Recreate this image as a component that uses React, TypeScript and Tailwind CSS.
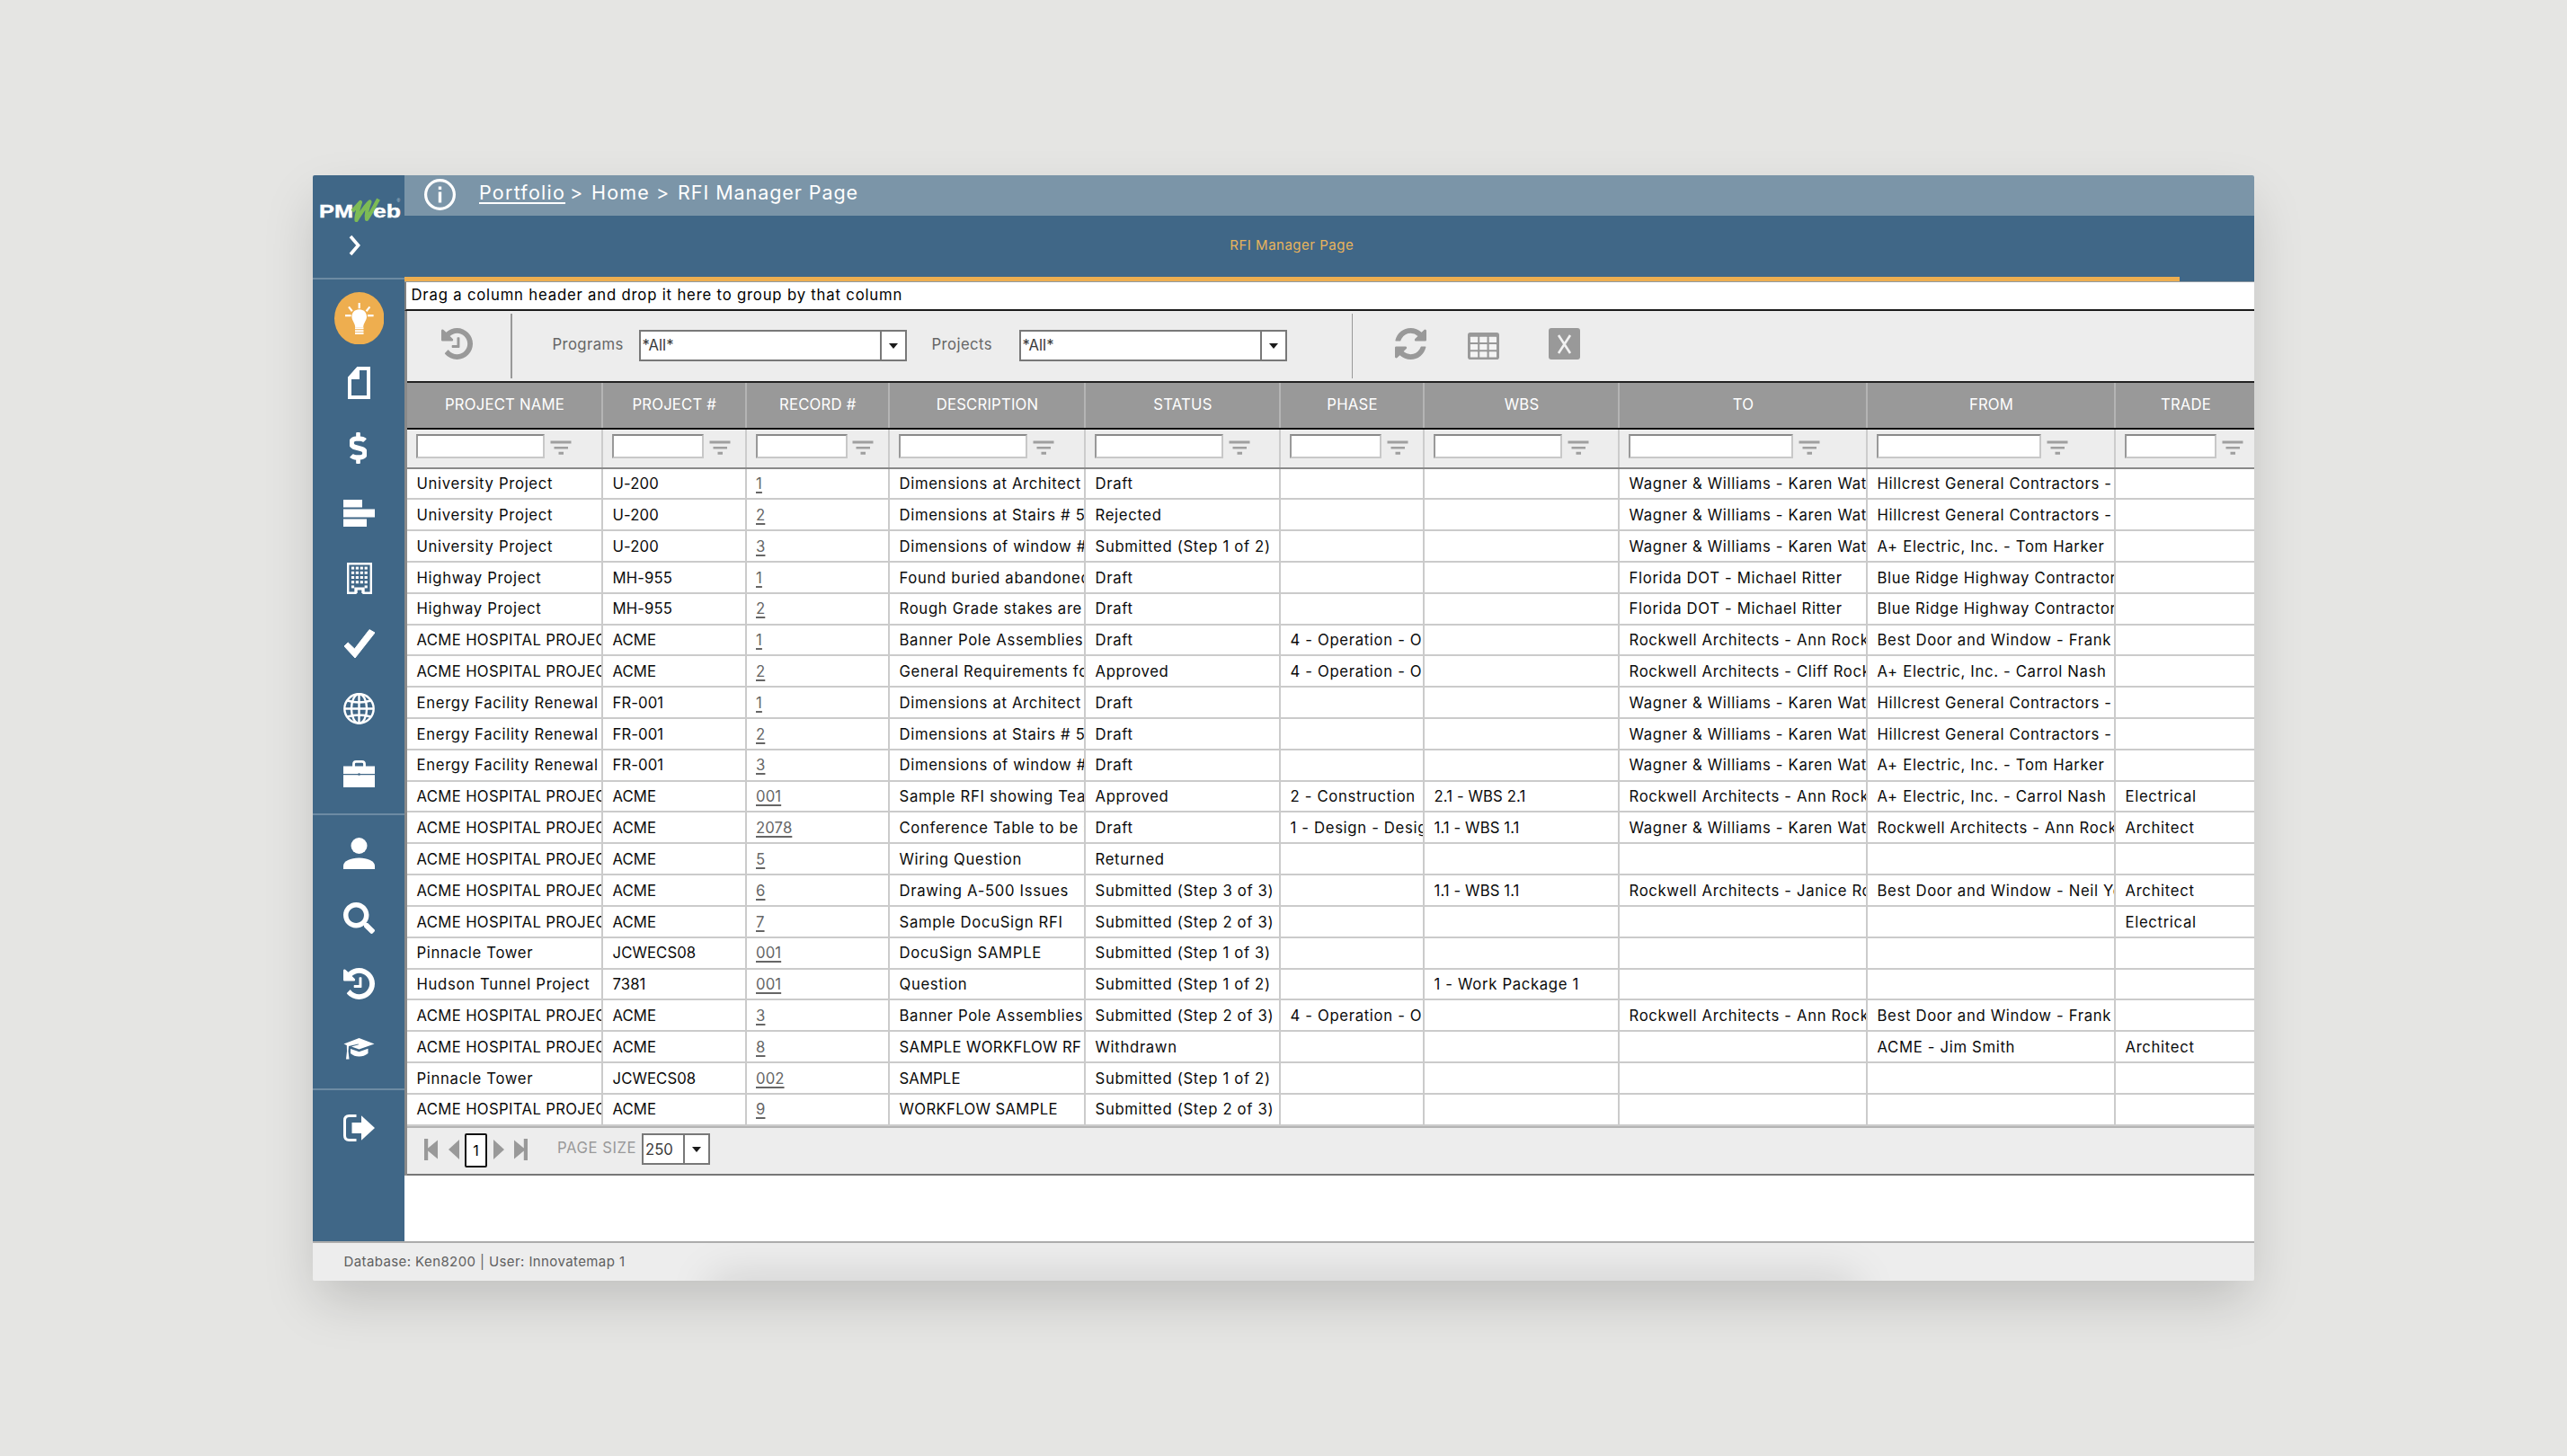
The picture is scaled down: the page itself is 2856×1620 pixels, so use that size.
import React from "react";
import { FaDollarSign, FaSearch } from "react-icons/fa";

const COLS =
  "grid grid-cols-[218px_159.5px_159.5px_218px_217px_160px_217px_276px_276px_155px]";

const REFRESH =
  "M1639 1056q0 5-1 7-64 268-268 434.5t-478 166.5q-146 0-282.5-55t-243.5-157l-129 129q-19 19-45 19t-45-19-19-45v-448q0-26 19-45t45-19h448q26 0 45 19t19 45-19 45l-137 137q71 66 161 102t187 36q134 0 250-65t186-179q11-17 53-117 8-23 30-23h192q13 0 22.5 9.5t9.5 22.5zm25-800v448q0 26-19 45t-45 19h-448q-26 0-45-19t-19-45 19-45l138-138q-148-137-349-137-134 0-250 65t-186 179q-11 17-53 117-8 23-30 23h-199q-13 0-22.5-9.5t-9.5-22.5v-7q65-268 270-434.5t480-166.5q146 0 284 55.5t245 156.5l130-129q19-19 45-19t45 19 19 45z";
const HISTORY =
  "M1664 896q0 156-61 298t-164 245-245 164-298 61q-172 0-327-72.5t-264-204.5q-7-10-6.5-22.5t8.5-20.5l137-138q10-9 25-9 16 2 23 12 73 95 179 147t225 52q104 0 198.5-40.5t163.5-109.5 109.5-163.5 40.5-198.5-40.5-198.5-109.5-163.5-163.5-109.5-198.5-40.5q-98 0-188 35.5t-160 101.5l137 138q31 30 14 69-17 40-59 40h-448q-26 0-45-19t-19-45v-448q0-42 40-59 39-17 69 14l130 129q107-101 244.5-156.5t284.5-55.5q156 0 298 61t245 164 164 245 61 298zm-640-288v448q0 14-9 23t-23 9h-320q-14 0-23-9t-9-23v-64q0-14 9-23t23-9h224v-352q0-14 9-23t23-9h64q14 0 23 9t9 23z";

type Column = { title: string; input: string };
const columns: Column[] = [
  { title: "PROJECT NAME", input: "w-[143px]" },
  { title: "PROJECT #", input: "w-[102px]" },
  { title: "RECORD #", input: "w-[102px]" },
  { title: "DESCRIPTION", input: "w-[143px]" },
  { title: "STATUS", input: "w-[143px]" },
  { title: "PHASE", input: "w-[102px]" },
  { title: "WBS", input: "w-[143px]" },
  { title: "TO", input: "w-[183px]" },
  { title: "FROM", input: "w-[183px]" },
  { title: "TRADE", input: "w-[102px]" },
];

const UNI = "University Project";
const HWY = "Highway Project";
const ACME = "ACME HOSPITAL PROJEC";
const ENERGY = "Energy Facility Renewal";
const WAGNER = "Wagner & Williams - Karen Wat";
const HILL = "Hillcrest General Contractors -";
const ROCK = "Rockwell Architects - Ann Rock";

const rows: string[][] = [
  [UNI, "U-200", "1", "Dimensions at Architect", "Draft", "", "", WAGNER, HILL, ""],
  [UNI, "U-200", "2", "Dimensions at Stairs # 5", "Rejected", "", "", WAGNER, HILL, ""],
  [UNI, "U-200", "3", "Dimensions of window #", "Submitted (Step 1 of 2)", "", "", WAGNER, "A+ Electric, Inc. - Tom Harker", ""],
  [HWY, "MH-955", "1", "Found buried abandoned", "Draft", "", "", "Florida DOT - Michael Ritter", "Blue Ridge Highway Contractor", ""],
  [HWY, "MH-955", "2", "Rough Grade stakes are", "Draft", "", "", "Florida DOT - Michael Ritter", "Blue Ridge Highway Contractor", ""],
  [ACME, "ACME", "1", "Banner Pole Assemblies", "Draft", "4 - Operation - O", "", ROCK, "Best Door and Window - Frank", ""],
  [ACME, "ACME", "2", "General Requirements fo", "Approved", "4 - Operation - O", "", "Rockwell Architects - Cliff Rock", "A+ Electric, Inc. - Carrol Nash", ""],
  [ENERGY, "FR-001", "1", "Dimensions at Architect", "Draft", "", "", WAGNER, HILL, ""],
  [ENERGY, "FR-001", "2", "Dimensions at Stairs # 5", "Draft", "", "", WAGNER, HILL, ""],
  [ENERGY, "FR-001", "3", "Dimensions of window #", "Draft", "", "", WAGNER, "A+ Electric, Inc. - Tom Harker", ""],
  [ACME, "ACME", "001", "Sample RFI showing Tea", "Approved", "2 - Construction", "2.1 - WBS 2.1", ROCK, "A+ Electric, Inc. - Carrol Nash", "Electrical"],
  [ACME, "ACME", "2078", "Conference Table to be s", "Draft", "1 - Design - Desig", "1.1 - WBS 1.1", WAGNER, ROCK, "Architect"],
  [ACME, "ACME", "5", "Wiring Question", "Returned", "", "", "", "", ""],
  [ACME, "ACME", "6", "Drawing A-500 Issues", "Submitted (Step 3 of 3)", "", "1.1 - WBS 1.1", "Rockwell Architects - Janice Ro", "Best Door and Window - Neil Yo", "Architect"],
  [ACME, "ACME", "7", "Sample DocuSign RFI", "Submitted (Step 2 of 3)", "", "", "", "", "Electrical"],
  ["Pinnacle Tower", "JCWECS08", "001", "DocuSign SAMPLE", "Submitted (Step 1 of 3)", "", "", "", "", ""],
  ["Hudson Tunnel Project", "7381", "001", "Question", "Submitted (Step 1 of 2)", "", "1 - Work Package 1", "", "", ""],
  [ACME, "ACME", "3", "Banner Pole Assemblies", "Submitted (Step 2 of 3)", "4 - Operation - O", "", ROCK, "Best Door and Window - Frank", ""],
  [ACME, "ACME", "8", "SAMPLE WORKFLOW RF", "Withdrawn", "", "", "", "ACME - Jim Smith", "Architect"],
  ["Pinnacle Tower", "JCWECS08", "002", "SAMPLE", "Submitted (Step 1 of 2)", "", "", "", "", ""],
  [ACME, "ACME", "9", "WORKFLOW SAMPLE", "Submitted (Step 2 of 3)", "", "", "", "", ""],
];

function tracking(text: string) {
  if (/[a-z]/.test(text)) return "tracking-[0.67px]";
  return text.length > 14 ? "tracking-[0.34px]" : "tracking-[0.1px]";
}

function Glyph({ box, className, children }: { box: string; className: string; children: React.ReactNode }) {
  return (
    <svg viewBox={box} preserveAspectRatio="none" className={`shrink-0 ${className}`}>
      {children}
    </svg>
  );
}

function Logo() {
  return (
    <svg viewBox="0 0 102 32" className="block h-[32px] w-[102px]">
      <text x="7" y="26.3" fontFamily="Liberation Sans" fontWeight="700" fontSize="20.5" fill="#fff" stroke="#fff" strokeWidth="0.4" textLength="38" lengthAdjust="spacingAndGlyphs">PM</text>
      <text x="67" y="26.3" fontFamily="Liberation Sans" fontWeight="700" fontSize="20.5" fill="#fff" stroke="#fff" strokeWidth="0.4" textLength="31" lengthAdjust="spacingAndGlyphs">eb</text>
      <path d="M44 19 L53 9 C51 16 48 23 48.5 29 C53 22 58 13 63.5 8.5 C61 15 59 22 60 28 C65 21 69 13 73 5.5" fill="none" stroke="#7dbb55" strokeWidth="4.2" strokeLinejoin="round" />
      <text x="93.5" y="8.5" fontFamily="Liberation Sans" fontSize="5" fill="#c9d6df">®</text>
    </svg>
  );
}

function NavSlot({ children }: { children: React.ReactNode }) {
  return <div className="flex h-[72.5px] w-full items-center justify-center pl-[1px]">{children}</div>;
}

function Bulb() {
  return (
    <svg viewBox="0 0 55.5 58.5" className="h-[58.5px] w-[55.5px]">
      <ellipse cx="27.75" cy="29.25" rx="27.75" ry="29.25" fill="#eeae4f" />
      <g stroke="#fff" strokeWidth="2.2">
        <path d="M27.7 12V18.2M16 16.4l3.8 4.8M39.4 16.4l-3.8 4.8M12 26.2h6.6M37 26.2h6.6" />
        <path d="M23 40.3h9.5M23 43.2h9.5M23 46h9.5" strokeWidth="1.9" />
      </g>
      <path d="M27.7 19.3c-5 0-8.3 3.6-8.3 8 0 4.6 3.4 6.5 3.8 11.6h9c.4-5.1 3.8-7 3.8-11.6 0-4.4-3.3-8-8.3-8z" fill="#fff" />
    </svg>
  );
}

const WINDOW_X = [4.9, 9.8, 14.7, 19.6];
const WINDOW_Y = [4.6, 9.8, 15, 20.2, 25.4];

function Sidebar() {
  return (
    <aside className="flex h-[1186px] w-[102px] shrink-0 flex-col bg-[#406787] text-white">
      <div className="h-[114px] pt-[21px]">
        <Logo />
        <Glyph box="0 0 14 24" className="ml-[40px] mt-[13px] h-[24px] w-[14px]">
          <path d="M2 2l8.6 10L2 22" fill="none" stroke="#fff" strokeWidth="3.6" />
        </Glyph>
      </div>
      <div className="h-[596px] border-t-2 border-[#6d8ba3] pt-[6.5px]">
        <NavSlot><Bulb /></NavSlot>
        <NavSlot>
          <Glyph box="0 0 25 36" className="h-[36px] w-[25px]">
            <path d="M11.5 2H23V34H2V12.5z" fill="none" stroke="#fff" strokeWidth="4" />
            <path d="M0 12L10.5 0h2.5v14H0z" fill="#fff" />
          </Glyph>
        </NavSlot>
        <NavSlot>
          <FaDollarSign viewBox="14 0 260 512" preserveAspectRatio="none" className="mr-[2px] h-[35px] w-[19px]" />
        </NavSlot>
        <NavSlot>
          <Glyph box="0 0 35 30" className="h-[30px] w-[35px]">
            <path d="M0 0h21v8.5H0zM0 10.6h35v9H0zM0 21.5h26v8.5H0z" fill="#fff" />
          </Glyph>
        </NavSlot>
        <NavSlot>
          <Glyph box="0 0 28 35" className="h-[35px] w-[28px]">
            <path d="M1.2 1.2h25.6v32.6H18.5V28.6h-9v5.2H1.2z" fill="none" stroke="#fff" strokeWidth="2.4" />
            <path d="M9.5 28h9v6h-2.2v-3.6h-4.6V34H9.5z" fill="#fff" />
            {WINDOW_Y.map((y) =>
              WINDOW_X.map((x) =>
                y > 25 && x > 5 && x < 19 ? null : <rect key={`${x}-${y}`} x={x} y={y} width="3.2" height="3" fill="#fff" />
              )
            )}
          </Glyph>
        </NavSlot>
        <NavSlot>
          <Glyph box="0 0 34 32" className="h-[32px] w-[34px]">
            <path d="M0 19L4.2 15 11.5 22 28 0.6 34 4 12 32z" fill="#fff" stroke="#fff" strokeWidth="1" strokeLinejoin="round" />
          </Glyph>
        </NavSlot>
        <NavSlot>
          <Glyph box="0 0 35 35" className="h-[35px] w-[35px]">
            <g fill="none" stroke="#fff" strokeWidth="2.4">
              <circle cx="17.5" cy="17.5" r="16.2" />
              <ellipse cx="17.5" cy="17.5" rx="8.6" ry="16.2" />
              <path d="M17.5 1.5v32M1.5 17.5h32M4.5 8.5q13 4 26 0M4.5 26.5q13-4 26 0" />
            </g>
          </Glyph>
        </NavSlot>
        <NavSlot>
          <Glyph box="0 0 35 30" className="h-[30px] w-[35px]">
            <path d="M0 6.5h35V15H0zM0 16.2h35V30H0z" fill="#fff" />
            <path d="M11.5 7V4q0-2.6 2.6-2.6h6.8Q23.5 1.4 23.5 4v3" fill="none" stroke="#fff" strokeWidth="2.8" />
            <circle cx="17.5" cy="15.5" r="1.3" fill="#406787" />
          </Glyph>
        </NavSlot>
      </div>
      <div className="h-[306px] border-t-2 border-[#6d8ba3] pt-[6px]">
        <NavSlot>
          <Glyph box="0 0 35 35" className="h-[35px] w-[35px]">
            <circle cx="17.5" cy="9" r="9" fill="#fff" />
            <path d="M0 35v-3.5C0 26 8 22.5 17.5 22.5S35 26 35 31.5V35z" fill="#fff" />
          </Glyph>
        </NavSlot>
        <NavSlot>
          <FaSearch preserveAspectRatio="none" className="h-[35px] w-[35px]" />
        </NavSlot>
        <NavSlot>
          <Glyph box="128 128 1536 1536" className="h-[35px] w-[35px]"><path d={HISTORY} fill="#fff" /></Glyph>
        </NavSlot>
        <NavSlot>
          <Glyph box="0 0 35 24" className="h-[24px] w-[35px]">
            <path d="M0.5 6.5L17.5 0 34.5 6.5 17.5 12.5 9 9.5 17 7.3 16.7 6.5 6 8.9 5.5 14.5 6.5 23.5H3L4 14.5 3.8 8z" fill="#fff" />
            <path d="M8 12L17.5 15.3 27.5 11.8V17Q23 20.5 17.5 20.5T8 17z" fill="#fff" />
          </Glyph>
        </NavSlot>
      </div>
      <div className="border-t-2 border-[#6d8ba3] pt-[6px]">
        <NavSlot>
          <Glyph box="0 0 35 30" className="h-[30px] w-[35px]">
            <path d="M14.5 1.5H6.5Q1.5 1.5 1.5 6.5v17q0 5 5 5h8" fill="none" stroke="#fff" strokeWidth="3" />
            <path d="M9.5 9H20V1.2L35 15 20 28.8V21H9.5z" fill="#fff" />
          </Glyph>
        </NavSlot>
      </div>
    </aside>
  );
}

function Select({ value, className }: { value: string; className: string }) {
  return (
    <div className={`flex h-[35px] shrink-0 border-2 border-[#787878] bg-white ${className}`}>
      <span className="flex flex-1 items-center pl-[2px] pt-[1px] text-[16.7px] text-[#3a3a3a]">{value}</span>
      <span className="flex w-[28px] items-center justify-center border-l-2 border-[#787878]">
        <span className="h-0 w-0 border-x-[5.5px] border-t-[6.5px] border-x-transparent border-t-[#1a1a1a]" />
      </span>
    </div>
  );
}

function Toolbar() {
  return (
    <div className="flex h-[78px] items-start bg-[#ededed] text-[#999]">
      <Glyph box="128 128 1536 1536" className="ml-[38px] mt-[18.5px] h-[35px] w-[35px]"><path d={HISTORY} fill="currentColor" /></Glyph>
      <span className="ml-[42px] mt-[2.5px] h-[72px] w-[1.5px] bg-[#999]" />
      <span className="ml-[45px] mt-[25px] w-[96px] text-[16.7px] leading-[24px] tracking-[0.4px] text-[#666]">Programs</span>
      <Select value="*All*" className="mt-[21px] w-[298px]" />
      <span className="ml-[28px] mt-[25px] w-[97px] text-[16.7px] leading-[24px] tracking-[0.43px] text-[#666]">Projects</span>
      <Select value="*All*" className="mt-[21px] w-[298px]" />
      <span className="ml-[72px] mt-[2.5px] h-[72px] w-[1.5px] bg-[#999]" />
      <Glyph box="128 128 1536 1536" className="ml-[46.5px] mt-[18.5px] h-[35px] w-[35px]"><path d={REFRESH} fill="currentColor" /></Glyph>
      <Glyph box="0 0 35 30" className="ml-[46.5px] mt-[23.5px] h-[30px] w-[35px]">
        <rect width="35" height="30" rx="2.8" fill="currentColor" />
        {[4.8, 13, 21.2].map((y) =>
          [2.9, 13.2, 23.7].map((x) => <rect key={`${x}-${y}`} x={x} y={y} width="8.3" height="6.2" rx="0.5" fill="#f4f4f4" />)
        )}
      </Glyph>
      <Glyph box="0 0 35 35" className="ml-[55px] mt-[18.5px] h-[35px] w-[35px]">
        <rect width="35" height="35" rx="3" fill="currentColor" />
        <path d="M11 8L24 28M24 8L11 28" stroke="#f2f2f2" strokeWidth="2.6" fill="none" />
      </Glyph>
    </div>
  );
}

function FilterIcon() {
  return (
    <Glyph box="0 0 24 16" className="ml-[5.5px] mt-[12px] h-[16px] w-[24px]">
      <path d="M0.5 0.5h23v3h-23zM4.5 7h15.5v2.6H4.5zM9.5 12.7h5.5v3H9.5z" fill="#9f9f9f" />
    </Glyph>
  );
}

function Grid() {
  return (
    <div>
      <div className={`${COLS} h-[49.5px] overflow-hidden bg-[#999]`}>
        {columns.map((c) => (
          <div key={c.title} className="flex items-center justify-center border-r-2 border-[#b4b4b4] pl-[1px] text-[16.7px] tracking-[0.2px] text-white last:border-0">{c.title}</div>
        ))}
      </div>
      <div className={`${COLS} h-[46px] overflow-hidden border-b-2 border-t-2 border-b-[#8a8a8a] border-t-[#111] bg-[#ededed]`}>
        {columns.map((c) => (
          <div key={c.title} className="flex border-r-2 border-[#ccc] pl-[10px] last:border-0">
            <span className={`mt-[5px] h-[27.5px] shrink-0 border-2 border-b-[#c8c8c8] border-l-[#999] border-r-[#c8c8c8] border-t-[#8a8a8a] bg-white ${c.input}`} />
            <FilterIcon />
          </div>
        ))}
      </div>
      {rows.map((r, i) => (
        <div key={i} className={`${COLS} h-[34.82px] border-b-2 border-[#cbcbcb] bg-white text-[16.7px] text-[#0a0a0a]`}>
          {r.map((t, j) => (
            <div
              key={j}
              className={`flex items-center overflow-hidden whitespace-nowrap border-r-2 border-[#cbcbcb] pl-[10.5px] pt-[1.5px] last:border-0 ${tracking(t)}`}
            >
              {j === 2 ? <span className="text-[#666] underline decoration-[1.5px] underline-offset-[3px]">{t}</span> : t}
            </div>
          ))}
        </div>
      ))}
    </div>
  );
}

function Pager() {
  return (
    <div className="flex h-[55px] items-start border-b-2 border-t-2 border-b-[#777] border-t-[#b4b4b4] bg-[#ededed]">
      <Glyph box="0 0 15 24" className="ml-[19px] mt-[12px] h-[24px] w-[15px]"><path d="M0 0h4.2v10.6L15 1.5v21L4.2 13.4V24H0z" fill="#999" /></Glyph>
      <Glyph box="0 0 12 22" className="ml-[11.5px] mt-[13px] h-[22px] w-[12px]"><path d="M12 0v22L0 11z" fill="#999" /></Glyph>
      <span className="ml-[6.5px] mt-[6.5px] flex h-[38px] w-[25px] items-center justify-center rounded-[2px] border-2 border-[#111] bg-white text-[16px] text-black">1</span>
      <Glyph box="0 0 12 22" className="ml-[7px] mt-[13px] h-[22px] w-[12px]"><path d="M0 0v22L12 11z" fill="#999" /></Glyph>
      <Glyph box="0 0 15 24" className="ml-[11px] mt-[12px] h-[24px] w-[15px]"><path d="M15 0h-4.2v10.6L0 1.5v21l10.8-9.1V24H15z" fill="#999" /></Glyph>
      <span className="ml-[33px] mt-[10.5px] w-[94px] text-[16.7px] leading-[24px] tracking-[0.53px] text-[#999]">PAGE SIZE</span>
      <Select value="250" className="mt-[6.5px] w-[76px]" />
    </div>
  );
}

function StatusBar() {
  return (
    <footer className="relative flex flex-1 items-center overflow-hidden border-t-2 border-[#acacac] bg-[#ededed] pl-[34.5px] text-[15px] tracking-[0.4px] text-[#5f5f5f]">
      <span>Database: Ken8200 | User: Innovatemap 1</span>
      <span className="absolute left-[450px] right-[450px] top-[44px] h-[40px] shadow-[0_0_50px_6px_rgba(0,0,0,0.13)]" />
    </footer>
  );
}

export default function App() {
  return (
    <div className="flex h-[1620px] w-[2856px] items-start justify-center bg-[#e5e5e3] pt-[195px] font-['Inter',sans-serif]">
      <div className="flex h-[1230px] w-[2160px] flex-col overflow-hidden rounded-[2px] shadow-[0_25px_55px_-5px_rgba(0,0,0,0.17)]">
        <div className="flex h-[1186px] shrink-0">
          <Sidebar />
          <main className="flex min-w-0 flex-1 flex-col bg-white">
            <div className="flex h-[45px] shrink-0 items-center bg-[#7b95a8] text-[21.5px] text-white">
              <svg viewBox="0 0 35 35" className="ml-[22px] h-[35px] w-[35px] -translate-y-[1px]">
                <circle cx="17.5" cy="17.5" r="15.9" fill="none" stroke="#fff" strokeWidth="3.2" />
                <path d="M15.8 8.5h3.4v3.6h-3.4zM15.8 14.5h3.4V26.5h-3.4z" fill="#fff" />
              </svg>
              <div className="flex -translate-y-[3px] items-center">
                <span className="ml-[26px] tracking-[1.23px] underline decoration-[2px] underline-offset-[3px]">Portfolio</span>
                <span className="ml-[5px] w-[24px] tracking-normal">&gt;</span>
                <span className="w-[72px] tracking-[1.2px]">Home</span>
                <span className="w-[24px]">&gt;</span>
                <span className="tracking-[0.94px]">RFI Manager Page</span>
              </div>
            </div>
            <div className="h-[74px] shrink-0 border-b border-[#8f9aa3] bg-[#406787]">
              <div className="flex h-[73px] w-[1974.5px] items-center justify-center border-b-[5px] border-[#edae50] pb-[2px] text-[15px] tracking-[0.51px] text-[#e8b45c]">
                RFI Manager Page
              </div>
            </div>
            <div className="flex h-[32px] shrink-0 items-center border-b-2 border-l-2 border-[#1c1c1c] border-l-[#808080] pb-[1px] pl-[5.5px] text-[16.7px] tracking-[0.82px] text-black">
              Drag a column header and drop it here to group by that column
            </div>
            <div className="border-l-[3px] border-[#8a8a8a]">
              <Toolbar />
              <div className="border-t-2 border-[#222]" />
              <Grid />
              <Pager />
            </div>
          </main>
        </div>
        <StatusBar />
      </div>
    </div>
  );
}
